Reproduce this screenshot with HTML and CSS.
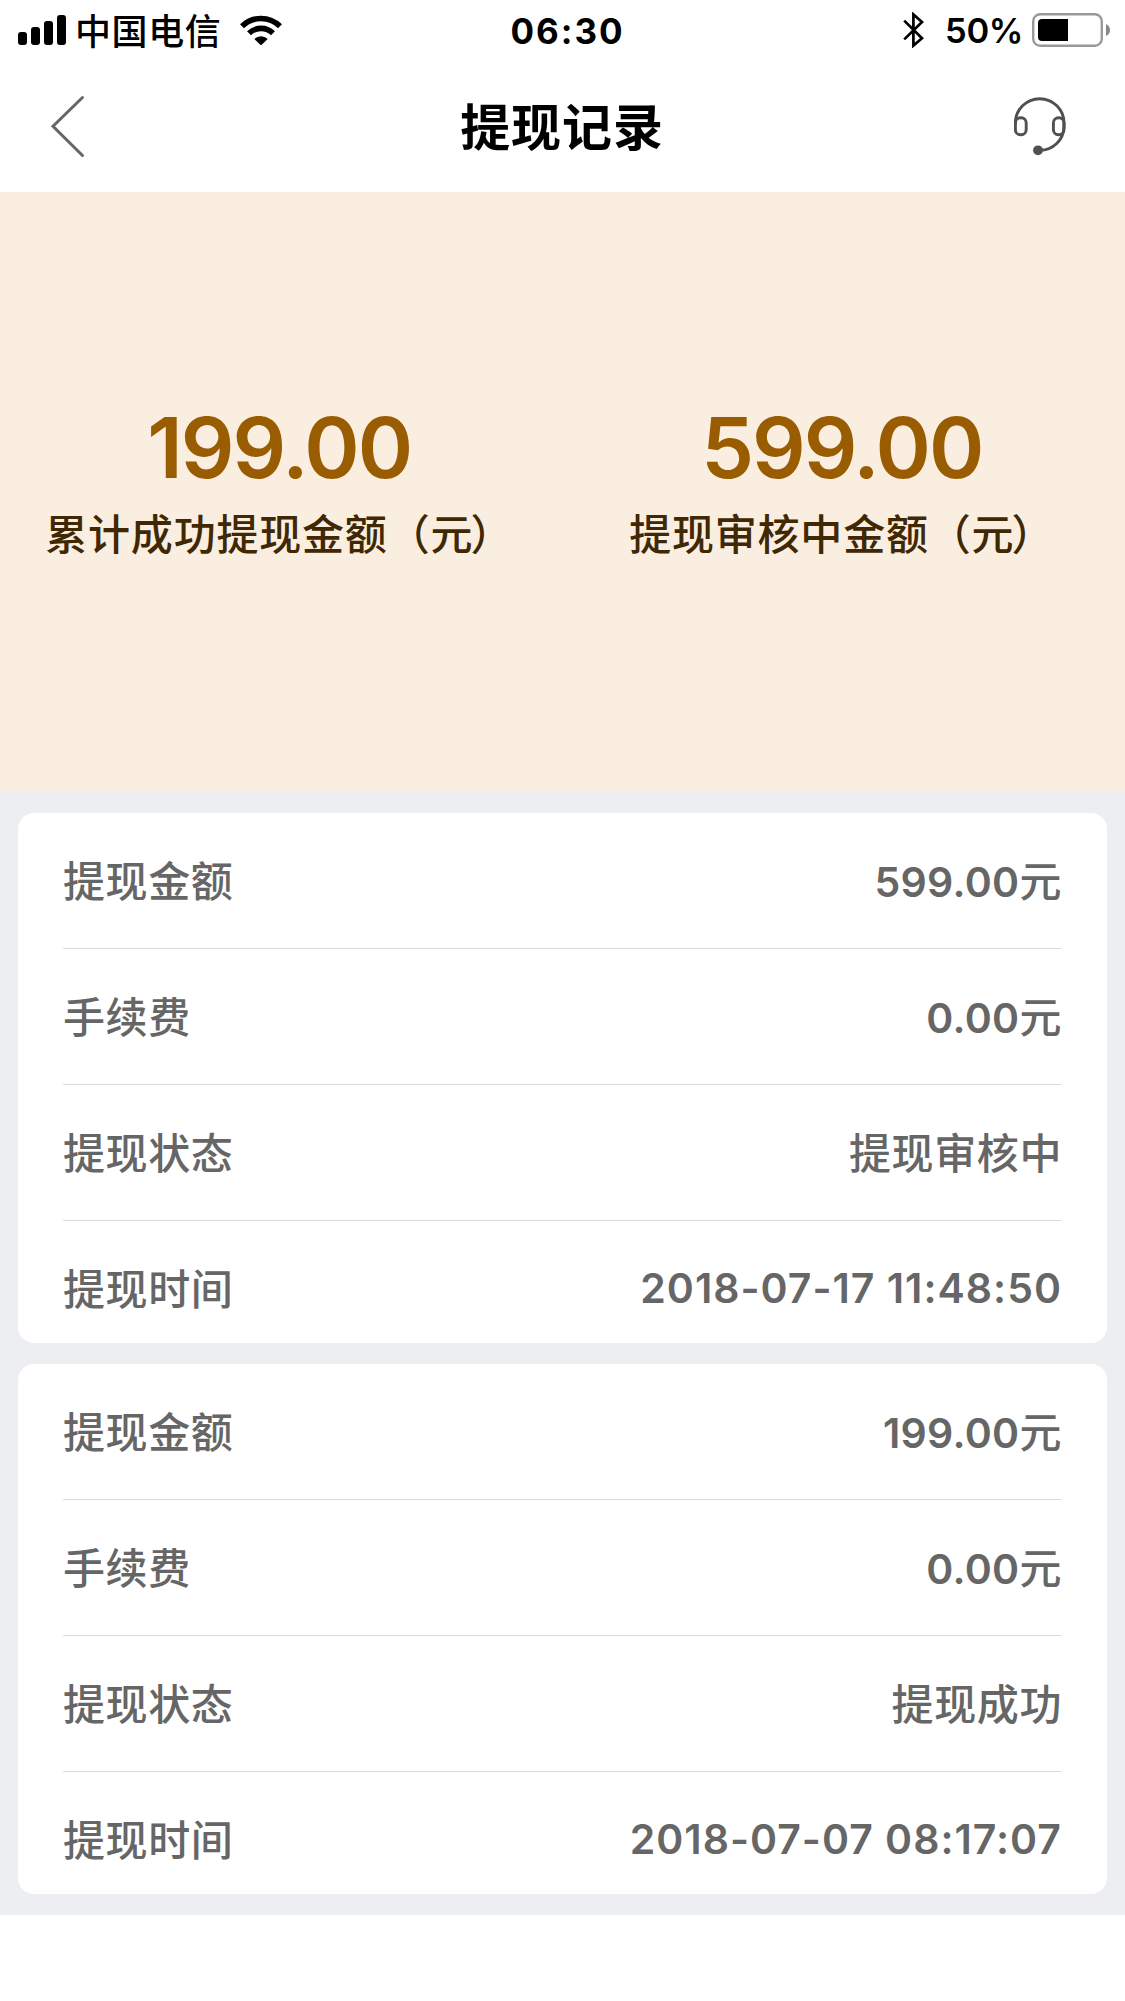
FILE: index.html
```
<!DOCTYPE html>
<html lang="zh-CN">

<head>
    <meta charset="UTF-8">
    <title>提现记录</title>
    <link rel="stylesheet" href="styles.css">
</head>

<body>

    <div class="status">
        <div class="status-left">
            <svg class="signal" width="49" height="30" viewBox="0 0 49 30">
                <rect x="0" y="17" width="9" height="13" rx="3" />
                <rect x="13" y="12" width="9" height="18" rx="3" />
                <rect x="26" y="6" width="9" height="24" rx="3" />
                <rect x="39" y="0" width="9" height="30" rx="3" />
            </svg>
            <span class="carrier">中国电信</span>
            <svg class="wifi" width="42" height="30" viewBox="0 0 42 30">
                <path d="M2 11.3A27 27 0 0 1 40 11.3M9 18.3A17.2 17.2 0 0 1 33 18.3" fill="none" stroke="#000" stroke-width="5.6" />
                <path d="M14.3 24A9.5 9.5 0 0 1 27.7 24L21 30.4Z" />
            </svg>
        </div>
        <span class="time">06:30</span>
        <div class="status-right">
            <svg class="bluetooth" width="22" height="36" viewBox="0 0 22 36">
                <path d="M1.2 8.6L19 26.2L10.4 33.6V2.4L19 10L1.2 27.4" fill="none" stroke="#000" stroke-width="2.7" />
            </svg>
            <span class="percent">50%</span>
            <svg class="battery" width="79" height="34" viewBox="0 0 79 34">
                <rect x="1.2" y="1.2" width="68.6" height="31.6" rx="7" fill="none" stroke="#999" stroke-width="2.4" />
                <path d="M10 6H36V28H10Q6 28 6 24V10Q6 6 10 6Z" />
                <path d="M74 11Q78 13 78 17T74 23Z" fill="#888" />
            </svg>
        </div>
    </div>

    <div class="header">
        <svg class="back" width="36" height="64" viewBox="0 0 36 64">
            <path d="M32.500 3.500L3 32.300L32.500 61.500" fill="none" stroke="#666" stroke-width="3" stroke-linecap="round" />
        </svg>
        <h1 class="title">提现记录</h1>
        <svg class="service" width="52" height="60" viewBox="0 0 52 60">
            <g fill="none" stroke="#505050" stroke-width="2.900">
                <path d="M1.400 28V27A24.300 24.300 0 0 1 50 27V31A24 24 0 0 1 26 54.300" />
                <rect x="1.400" y="21.800" width="10.800" height="17" rx="5" />
                <rect x="39.400" y="21.800" width="10.600" height="17" rx="5" />
            </g>
            <circle cx="24" cy="54.300" r="4.900" fill="#505050" />
        </svg>
    </div>

    <div class="summary">
        <div class="summary-item">
            <p class="money">199.00</p>
            <p class="desc">累计成功提现金额（<span class="unit">元</span>）</p>
        </div>
        <div class="summary-item">
            <p class="money">599.00</p>
            <p class="desc">提现审核中金额（<span class="unit">元</span>）</p>
        </div>
    </div>

    <div class="list">
        <ul class="card">
            <li><span>提现金额</span><span><b class="num">599.00</b>元</span></li>
            <li><span>手续费</span><span><b class="num">0.00</b>元</span></li>
            <li><span>提现状态</span><span>提现审核中</span></li>
            <li><span>提现时间</span><b class="num date">2018-07-17 11:48:50</b></li>
        </ul>
        <ul class="card">
            <li><span>提现金额</span><span><b class="num">199.00</b>元</span></li>
            <li><span>手续费</span><span><b class="num">0.00</b>元</span></li>
            <li><span>提现状态</span><span>提现成功</span></li>
            <li><span>提现时间</span><b class="num date">2018-07-07 08:17:07</b></li>
        </ul>
    </div>

</body>

</html>
```
FILE: styles.css
```
* {
    margin: 0;
    padding: 0;
    box-sizing: border-box;
}

body {
    background: #fff;
    font-family: Inter, "Noto Sans CJK SC", sans-serif;
    font-weight: 500;
}

svg {
    display: block;
    flex: none;
}

/* 状态栏 */
.status {
    display: grid;
    grid-template-columns: 1fr auto 1fr;
    align-items: center;
    height: 60px;
    padding: 0 14px 0 18px;
    line-height: 56px;
    white-space: nowrap;
}

.status-left,
.status-right {
    display: flex;
    align-items: center;
    height: 60px;
}

.status-right {
    justify-content: flex-end;
}

.carrier {
    margin-left: 8px;
    padding-top: 4px;
    font-size: 36px;
    letter-spacing: 0.6px;
}

.wifi {
    margin-left: 19px;
}

.time {
    padding: 2px 0 0 6px;
    font-size: 35px;
    font-weight: 700;
    letter-spacing: 2px;
}

.percent {
    margin: 0 9px 0 20px;
    padding-top: 2px;
    font-size: 34.5px;
    font-weight: 600;
    letter-spacing: -0.4px;
}

/* 标题栏 */
.header {
    display: flex;
    justify-content: space-between;
    align-items: center;
    height: 132px;
    padding: 0 59px 0 50px;
}

.title {
    padding: 3px 0 0 24px;
    font-size: 50px;
    font-weight: 700;
    letter-spacing: 0.9px;
    line-height: 72px;
}

/* 汇总 */
.summary {
    display: flex;
    height: 600px;
    padding-top: 206px;
    background: #faeee0;
    text-align: center;
}

.summary-item {
    width: 50%;
}

.money {
    height: 95px;
    padding-right: 4px;
    line-height: 100px;
    font-size: 84px;
    font-weight: 600;
    letter-spacing: -2px;
    color: #995c00;
}

.desc {
    height: 84px;
    padding-right: 4px;
    line-height: 84px;
    font-size: 42px;
    letter-spacing: 0.8px;
    color: #3f2803;
    white-space: nowrap;
}

/* 右括号靠近“元” */
.unit {
    letter-spacing: -2px;
}

/* 记录列表 */
.list {
    padding: 21px 18px;
    background: #edeef2;
}

.card {
    height: 530px;
    padding: 0 45px;
    border-radius: 16px;
    background: #fff;
    list-style: none;
}

.card + .card {
    margin-top: 21px;
}

.card > li {
    display: flex;
    justify-content: space-between;
    height: 136px;
    border-bottom: 1px solid #dcdcdc;
    font-size: 42px;
    line-height: 137px;
    letter-spacing: 0.6px;
    color: #666;
}

.card > li:last-child {
    height: 122px;
    border-bottom: none;
}

.num {
    font-size: 41px;
    font-weight: 600;
    letter-spacing: 0.3px;
}

.date {
    line-height: 135px;
    letter-spacing: 1px;
}
```
